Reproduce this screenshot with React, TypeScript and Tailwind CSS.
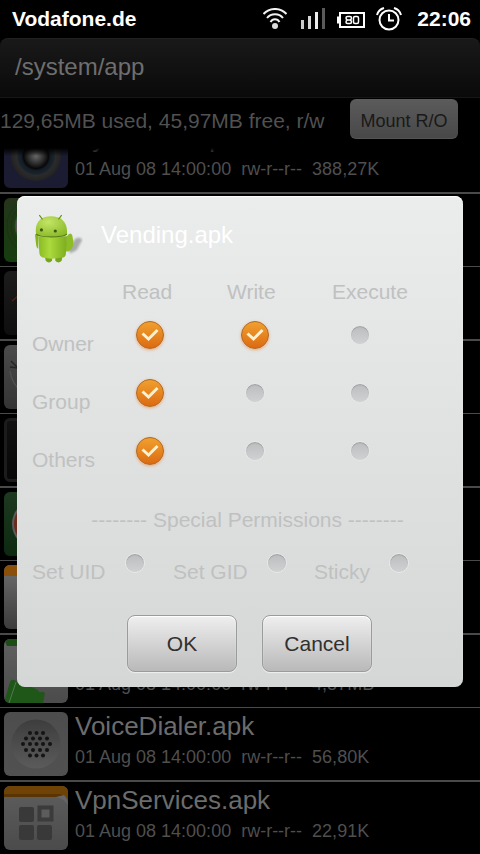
import type { ReactNode } from 'react';

function WifiIcon() {
  return (
    <svg width="24" height="22" viewBox="0 0 24 22" fill="none" stroke="#f2f2f2" strokeWidth="2">
      <path d="M.5 6C6.500 -.7 17.500 -.7 23.500 6" />
      <path d="M4 10C8 5 16 5 20 10" />
      <path d="M7.500 14C9.500 10.200 14.500 10.200 16.500 14" />
      <circle cx="12" cy="18" r="3" fill="#dcdcdc" stroke="none" />
    </svg>
  );
}

function SignalIcon() {
  return (
    <svg width="24" height="22" viewBox="0 0 24 22">
      <path d="M0 12h3v9H0z" fill="#c9c9c9" />
      <path d="M7 8h3v13H7z" fill="#d6d6d6" />
      <path d="M14 4h3v17h-3z" fill="#ececec" />
      <path d="M21 0h3v21h-3z" fill="#5a5a5a" />
    </svg>
  );
}

function BatteryIcon() {
  return (
    <svg width="28" height="16" viewBox="0 0 28 16" fill="none" stroke="#fff" strokeWidth="2">
      <path d="M3 1h24v14H3z" />
      <path d="M1 4.500v7" />
      <path
        d="M10.500 4.500h2.500q1.500 0 1.500 1.500t-1.500 2q1.500 .5 1.500 2t-1.500 1.500h-2.500Q9 11.500 9 10t1.500-2Q9 7.500 9 6t1.500-1.500zM10 8h3.500M18 4.500h2q1.500 0 1.500 1.500v4q0 1.500-1.500 1.500h-2q-1.500 0-1.500-1.500V6q0-1.500 1.500-1.500z"
        strokeWidth="1.500"
      />
    </svg>
  );
}

function AlarmIcon() {
  return (
    <svg width="26" height="24" viewBox="0 0 26 24" fill="none" stroke="#fff" strokeWidth="2">
      <circle cx="13" cy="13" r="9.500" />
      <path d="M13 7v6.500h5" />
      <path d="M1 8C2 4.500 4.500 2 8 1M18 1c3.500 1 6 3.500 7 7" />
    </svg>
  );
}

function AndroidIcon() {
  return (
    <svg width="48" height="50" viewBox="2 1 45 47" aria-hidden="true">
      <defs>
        <linearGradient id="droid" x1="0" y1="0" x2="1" y2="0">
          <stop offset="0" stopColor="#8aba24" />
          <stop offset=".4" stopColor="#aada3c" />
          <stop offset="1" stopColor="#7dac1e" />
        </linearGradient>
        <radialGradient id="droidHead" cx=".4" cy=".3" r=".8">
          <stop offset="0" stopColor="#c3e566" />
          <stop offset="1" stopColor="#88b824" />
        </radialGradient>
        <filter id="soft"><feGaussianBlur stdDeviation="1" /></filter>
      </defs>
      <path d="M33 34l7-10q6-2 6 2l-5 9-6 3z" fill="#8c8f8e" opacity=".7" filter="url(#soft)" />
      <path d="M11 40h7v5q-3 3-6 0zM21 40h7l-1 5q-3 3-6 0z" fill="#78a51d" />
      <path d="M2 21q0-2 3-1v14q-2-1-2-4z" fill="#86b524" />
      <path d="M32 22q3-5 5-1l1 6q0 6-3 8-2 2-5 1z" fill="#8cbd27" />
      <path d="M5 22h27l-1 16q0 4-4 4-9 2-18 0-3-1-3-5z" fill="url(#droid)" />
      <path d="M3 20C1 8 8 3 17 3s16 5 15 17q-2 2-14 2T3 20z" fill="url(#droidHead)" />
      <path d="M3 20q3 2.500 14 2.500T32 20" fill="none" stroke="#557b10" />
      <path d="M9 6L6 2M24 6l3-4" stroke="#628c17" strokeWidth="1" />
      <circle cx="8" cy="16" r="1.500" fill="#40550f" />
      <circle cx="21" cy="17" r="1.500" fill="#40550f" />
    </svg>
  );
}

const tile = 'relative size-16 shrink-0 overflow-hidden rounded-md';

function CameraTile() {
  return (
    <div className={`${tile} bg-[#1b1b31]`}>
      <svg viewBox="0 0 64 64" className="size-full">
        <defs>
          <radialGradient id="lens">
            <stop offset="0" stopColor="#686868" />
            <stop offset=".3" stopColor="#303030" />
            <stop offset=".5" stopColor="#08080a" />
            <stop offset=".58" stopColor="#141c24" />
            <stop offset=".72" stopColor="#1b242c" />
            <stop offset=".78" stopColor="#2b2b2b" />
            <stop offset="1" stopColor="#222" />
          </radialGradient>
        </defs>
        <circle cx="32" cy="32" r="25" fill="url(#lens)" />
      </svg>
    </div>
  );
}

function GreenTile() {
  return (
    <div className={`${tile} bg-linear-to-b from-[#25351b] to-[#153d10]`}>
      <svg viewBox="0 0 64 64" className="size-full" fill="none" stroke="#123a0e" strokeWidth="1">
        <circle cx="32" cy="28" r="21" fill="#555" stroke="#1f5a18" />
        <circle cx="32" cy="28" r="25" />
        <circle cx="32" cy="28" r="29" />
      </svg>
    </div>
  );
}

function GaugeTile() {
  return (
    <div className={`${tile} bg-linear-to-b from-[#1d1c1c] to-[#0e0e0e]`}>
      <svg viewBox="0 0 64 64" className="size-full" fill="none">
        <path d="M8 30l6-5" stroke="#4d2118" strokeWidth="1.500" />
      </svg>
    </div>
  );
}

function GrayTile() {
  return (
    <div className={`${tile} bg-linear-to-b from-[#4b4b4b] to-[#343434]`}>
      <svg viewBox="0 0 64 64" className="size-full" fill="none" stroke="#242424" strokeWidth="1.500">
        <path d="M7 16l8 8M6 22l8 1" />
        <path d="M6 26q2 14 12 20" stroke="#505050" />
      </svg>
    </div>
  );
}

function DarkTile() {
  return <div className={`${tile} border-3 border-[#1c1c1c] bg-linear-to-b from-[#111] to-[#070707]`} />;
}

function TalkTile() {
  return (
    <div className={`${tile} bg-linear-to-b from-[#1d3a20] to-[#0d2a10]`}>
      <svg viewBox="0 0 64 64" className="size-full">
        <circle cx="32" cy="32" r="23" fill="#6a2a1c" stroke="#5a5a5a" strokeWidth="2" />
      </svg>
    </div>
  );
}

function CalendarTile() {
  return (
    <div className={`${tile} bg-linear-to-b from-[#6e6e6e] to-[#3c3c3c]`}>
      <div className="h-[11px] bg-[#8a4f0a]" />
    </div>
  );
}

function DroidTile() {
  return (
    <div className={`${tile} bg-linear-to-b from-[#606060] to-[#4b4b4b]`}>
      <svg viewBox="0 0 64 64" className="size-full">
        <path d="M0 0h64v7H3z" fill="#1c4d17" />
        <path d="M1 60l5-17q1-3 4-2l22 9q4 2 5 6l1 8H2zM36 64l-1-9q2-4 6-1l-2 10z" fill="#1f5718" />
        <path d="M5 64l7-21" stroke="#4d7a48" strokeWidth="1" />
      </svg>
    </div>
  );
}

const speakerRows = [
  { y: 21, xs: [26, 32.500, 39] },
  { y: 26.500, xs: [22, 29, 36, 43] },
  { y: 32, xs: [19, 26, 32.500, 39, 46] },
  { y: 38, xs: [22, 29, 36, 43] },
  { y: 43.500, xs: [26, 32.500, 39] },
];

function SpeakerTile() {
  return (
    <div className={`${tile} bg-linear-to-b from-[#4d4d4d] to-[#515151]`}>
      <svg viewBox="0 0 64 64" className="size-full">
        <defs>
          <linearGradient id="dish" x1="0" y1="0" x2="0" y2="1">
            <stop offset="0" stopColor="#3d3d3d" />
            <stop offset="1" stopColor="#5b5b5b" />
          </linearGradient>
        </defs>
        <circle cx="32" cy="32" r="24.500" fill="url(#dish)" />
        {speakerRows.map((r) => r.xs.map((x) => <circle key={`${x}-${r.y}`} cx={x} cy={r.y} r="2" fill="#141414" />))}
      </svg>
    </div>
  );
}

function ServicesTile() {
  return (
    <div className={`${tile} bg-linear-to-b from-[#5e5e5e] to-[#4b4b4b]`}>
      <svg viewBox="0 0 64 64" className="size-full">
        <path d="M0 0h64v14l-3-4-6 1H0z" fill="#6f4206" />
        <path d="M0 8h56l4 2-5 1H0z" fill="#5a3403" />
        <path d="M52 11l8-2q3 3 4 10-3-6-12-8z" fill="#666" />
        <g fill="#393939">
          <rect x="15" y="21" width="15" height="15" rx="2" />
          <rect x="15" y="39" width="15" height="15" rx="2" />
          <rect x="33" y="39" width="15" height="15" rx="2" />
        </g>
        <rect x="35.500" y="21.500" width="12" height="12" fill="#5c5c5c" stroke="#3b3b3b" strokeWidth="4" />
      </svg>
    </div>
  );
}

type Entry = { icon: ReactNode; name?: string; info?: string };

const entries: Entry[] = [
  { icon: <CameraTile />, name: 'SystemUI.apk', info: '01 Aug 08 14:00:00  rw-r--r--  388,27K' },
  { icon: <GreenTile /> },
  { icon: <GaugeTile /> },
  { icon: <GrayTile /> },
  { icon: <DarkTile /> },
  { icon: <TalkTile /> },
  { icon: <CalendarTile /> },
  { icon: <DroidTile />, info: '01 Aug 08 14:00:00  rw-r--r--  4,87MB' },
  { icon: <SpeakerTile />, name: 'VoiceDialer.apk', info: '01 Aug 08 14:00:00  rw-r--r--  56,80K' },
  { icon: <ServicesTile />, name: 'VpnServices.apk', info: '01 Aug 08 14:00:00  rw-r--r--  22,91K' },
];

function FileRow({ icon, name, info }: Entry) {
  return (
    <li className="box-content flex h-[72px] gap-[7px] border-[#4a4a4a] pl-1 odd:border-b-2 even:border-b last:border-b-0">
      <div className="flex items-center">{icon}</div>
      <div className="flex flex-col justify-end gap-[3px] pb-[11px] whitespace-pre">
        {name && <span className="text-[26px] leading-8 text-[#6c6c6c]">{name}</span>}
        <span className="text-[18px] leading-6 text-[#4f4f4f]">{info}</span>
      </div>
    </li>
  );
}

function Toggle({ label, checked = false }: { label: string; checked?: boolean }) {
  return (
    <span className="relative flex h-[58px] w-14 items-center justify-center">
      <input
        type="checkbox"
        aria-label={label}
        defaultChecked={checked}
        className="peer size-5 appearance-none rounded-full border border-[#e8eaea] bg-linear-to-b from-[#bbbdbe] to-[#cfd1d2] shadow-[inset_0_1px_1px_#9c9e9f] checked:size-7 checked:border-[#b06a28] checked:from-[#f0a02e] checked:to-[#dc6a10] checked:shadow-[0_1px_3px_#e9a878]"
      />
      <svg
        viewBox="0 0 28 28"
        className="pointer-events-none absolute hidden size-7 peer-checked:block"
        fill="none"
        stroke="#fff0cf"
        strokeWidth="3"
      >
        <path d="M6.500 12.500l6 5.500 9-9" />
      </svg>
    </span>
  );
}

const columns = ['Read', 'Write', 'Execute'];
const permissions = [
  { who: 'Owner', flags: [true, true, false] },
  { who: 'Group', flags: [true, false, false] },
  { who: 'Others', flags: [true, false, false] },
];
const special = ['Set UID', 'Set GID', 'Sticky'];

const dialogButton =
  'h-[57px] w-[110px] rounded-lg border border-[#9b9b9b] bg-linear-to-b from-[#efefef] to-[#b9b9b9] text-[21px] text-[#303030] shadow-[0_1px_1px_#f0f0f0,inset_0_1px_1px_#fff]';

function PermissionsDialog() {
  return (
    <div
      role="dialog"
      aria-labelledby="dialog-title"
      className="w-full rounded-lg bg-linear-to-b from-[#ebecec] to-[#d5d7d6] pr-1 pb-[15px] pl-[15px] text-[21px] leading-6 text-[#bfc1c1] shadow-[inset_0_1px_1px_#fff]"
    >
      <div className="flex h-[78px] items-center gap-[18px] pl-[3px]">
        <div className="pt-2"><AndroidIcon /></div>
        <h2 id="dialog-title" className="text-[24px] text-white">Vending.apk</h2>
      </div>
      <table className="mt-[6px] table-fixed border-collapse text-left">
        <thead>
          <tr className="h-[26px] align-top">
            <td className="w-[90px] p-0" />
            {columns.map((c) => (
              <th key={c} scope="col" className="w-[105px] p-0 font-normal">{c}</th>
            ))}
          </tr>
        </thead>
        <tbody>
          {permissions.map((p) => (
            <tr key={p.who} className="h-[58px] align-top">
              <th scope="row" className="p-0 pt-[26px] font-normal">{p.who}</th>
              {p.flags.map((f, i) => (
                <td key={columns[i]} className="p-0"><Toggle label={`${p.who} ${columns[i]}`} checked={f} /></td>
              ))}
            </tr>
          ))}
        </tbody>
      </table>
      <p className="mt-7 pl-1 text-center">-------- Special Permissions --------</p>
      <div className="mt-[2px] flex">
        {special.map((s) => (
          <label key={s} className="flex w-[141px] gap-px">
            <span className="pt-[26px]">{s}</span>
            <Toggle label={s} />
          </label>
        ))}
      </div>
      <div className="mt-[23px] flex justify-center gap-[25px] pl-2">
        <button type="button" className={dialogButton}>OK</button>
        <button type="button" className={dialogButton}>Cancel</button>
      </div>
    </div>
  );
}

export default function App() {
  return (
    <div className="relative flex h-screen flex-col overflow-hidden bg-black font-['Liberation_Sans',Arial,sans-serif]">
      <div className="flex h-[38px] shrink-0 items-center justify-between pr-[9px] pl-3 text-[21px] font-bold text-white">
        <span>Vodafone.de</span>
        <div className="flex items-center">
          <span className="mr-[14px]"><WifiIcon /></span>
          <span className="mr-3"><SignalIcon /></span>
          <span className="mr-[11px] pt-[2px]"><BatteryIcon /></span>
          <span className="mr-[15px]"><AlarmIcon /></span>
          <span>22:06</span>
        </div>
      </div>
      <header className="flex h-[60px] shrink-0 items-center rounded-t-lg border-y border-t-[#222] border-b-[#161616] bg-linear-to-b from-[#191919] to-[#0a0a0a] pb-[2px] pl-[15px]">
        <h1 className="text-[24px] leading-7 text-[#6e6e6e]">/system/app</h1>
      </header>
      <div className="flex h-[50px] shrink-0 items-start justify-between pt-px pr-[22px]">
        <span className="pt-[10px] text-[21px] leading-6 whitespace-nowrap text-[#515151]">129,65MB used, 45,97MB free, r/w</span>
        <button
          type="button"
          className="h-10 w-[108px] rounded-md border-b border-[#555] bg-linear-to-b from-[#5b5b5b] to-[#484848] pt-[6px] text-[18px] text-[#191919]"
        >
          Mount R/O
        </button>
      </div>
      <div className="relative min-h-0 flex-1 overflow-hidden">
        <ul className="-mt-7">
          {entries.map((e, i) => (
            <FileRow key={i} {...e} />
          ))}
        </ul>
        <div className="absolute inset-x-0 top-0 h-2 bg-linear-to-b from-black to-transparent" />
      </div>
      <div className="absolute inset-0 flex items-center px-[17px] pt-[29px]">
        <PermissionsDialog />
      </div>
    </div>
  );
}
